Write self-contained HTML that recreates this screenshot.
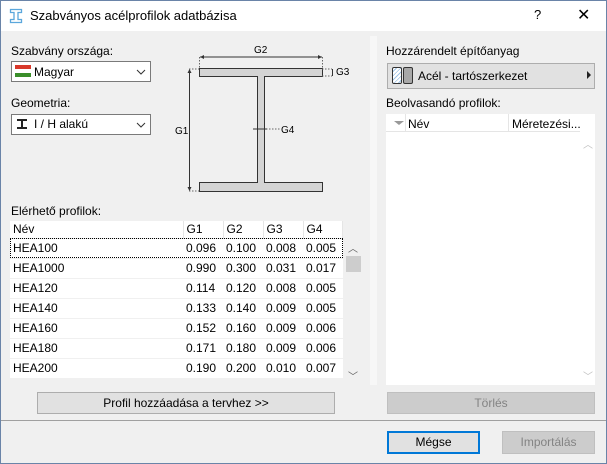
<!DOCTYPE html>
<html><head><style>
*{margin:0;padding:0;box-sizing:border-box}
body{width:607px;height:464px;background:#f0f0f0;font-family:"Liberation Sans",sans-serif;font-size:12px;color:#000;position:relative;overflow:hidden}
.a{position:absolute}
.frame{position:absolute;left:0;top:0;width:607px;height:464px;border:1px solid #6a84a8;pointer-events:none}
.title{left:0;top:0;width:607px;height:31px;background:#fff}
.combo{background:#fff;border:1px solid #7a7a7a;height:21px}
.btn{background:#e1e1e1;border:1px solid #adadad;text-align:center;line-height:20px}
.dis{background:#cccccc;border:1px solid #bfbfbf;color:#838383}
.tw{position:absolute;left:10px;top:221px;width:333px;height:158px;overflow:hidden;background:#fff}
table{border-collapse:collapse;width:333px;background:#fff}
td{height:20px;padding-left:3px;border-bottom:1px solid #f0f0f0;font-size:12px}
th{height:17px;text-align:left;font-weight:normal;padding-left:3px;border-right:1px solid #e5e5e5;border-bottom:1px solid #e5e5e5}
</style></head><body>
<div class="a title"></div>
<svg class="a" style="left:9px;top:8px" width="14" height="16" viewBox="0 0 14 16"><path d="M1.5 1.5h11v3h-3.5v7h3.5v3h-11v-3h3.5v-7h-3.5z" fill="none" stroke="#5ba7dc" stroke-width="1.3"/></svg>
<div class="a" style="left:30px;top:8px;font-size:13px">Szabványos acélprofilok adatbázisa</div>
<div class="a" style="left:534px;top:7px;font-size:13px">?</div>
<div class="a" style="left:577px;top:5px;font-size:16px">✕</div>

<div class="a" style="left:11px;top:44px">Szabvány országa:</div>
<div class="a combo" style="left:11px;top:61px;width:140px"></div>
<div class="a" style="left:15px;top:65px;width:16px;height:4px;background:#d8382a"></div>
<div class="a" style="left:15px;top:69px;width:16px;height:4px;background:#fff"></div>
<div class="a" style="left:15px;top:73px;width:16px;height:4px;background:#3a8e2a"></div>
<div class="a" style="left:34px;top:65px">Magyar</div>
<svg class="a" style="left:136px;top:69px" width="10" height="6"><path d="M1 1l4 4 4-4" fill="none" stroke="#333"/></svg>

<div class="a" style="left:11px;top:96px">Geometria:</div>
<div class="a combo" style="left:11px;top:114px;width:140px"></div>
<svg class="a" style="left:16px;top:118px" width="12" height="12"><path d="M1 2h10M1 10h10M6 2v8" stroke="#222" stroke-width="2"/></svg>
<div class="a" style="left:34px;top:117px">I / H alakú</div>
<svg class="a" style="left:136px;top:122px" width="10" height="6"><path d="M1 1l4 4 4-4" fill="none" stroke="#333"/></svg>

<svg class="a" style="left:170px;top:40px" width="185" height="160" viewBox="170 40 185 160">
<path d="M199.5 68.5h123v8h-58v106h58v9h-123v-9h58v-106h-58z" fill="#d4d4d4" stroke="#333"/>
<path d="M200 57h122" stroke="#333"/><path d="M200 57l4-2v4zM322 57l-4-2v4z" fill="#333"/>
<path d="M199.5 57v11M322.5 57v11M322 69h10M322 76h10M189 69h10M189 191h10M266 129h14" stroke="#666" stroke-dasharray="1.5 1.5"/>
<path d="M189.5 70v120" stroke="#333"/><path d="M189.5 69l-2 4h4zM189.5 191l-2-4h4z" fill="#333"/>
<path d="M332.5 69v7" stroke="#333"/>
<path d="M253 129h14" stroke="#333"/>
<text x="254" y="53" font-size="10" font-family="Liberation Sans">G2</text>
<text x="336" y="75" font-size="10" font-family="Liberation Sans">G3</text>
<text x="175" y="134" font-size="10" font-family="Liberation Sans">G1</text>
<text x="281" y="133" font-size="10" font-family="Liberation Sans">G4</text>
</svg>

<div class="a" style="left:11px;top:204px">Elérhető profilok:</div>
<div class="tw">
<table>
<tr><th style="width:173px">Név</th><th style="width:40px">G1</th><th style="width:40px">G2</th><th style="width:40px">G3</th><th>G4</th></tr>
<tr><td>HEA100</td><td>0.096</td><td>0.100</td><td>0.008</td><td>0.005</td></tr>
<tr><td>HEA1000</td><td>0.990</td><td>0.300</td><td>0.031</td><td>0.017</td></tr>
<tr><td>HEA120</td><td>0.114</td><td>0.120</td><td>0.008</td><td>0.005</td></tr>
<tr><td>HEA140</td><td>0.133</td><td>0.140</td><td>0.009</td><td>0.005</td></tr>
<tr><td>HEA160</td><td>0.152</td><td>0.160</td><td>0.009</td><td>0.006</td></tr>
<tr><td>HEA180</td><td>0.171</td><td>0.180</td><td>0.009</td><td>0.006</td></tr>
<tr><td>HEA200</td><td>0.190</td><td>0.200</td><td>0.010</td><td>0.007</td></tr>
<tr><td>HEA220</td><td>0.210</td><td>0.220</td><td>0.011</td><td>0.007</td></tr>
</table>
</div>
<div class="a" style="left:10px;top:238px;width:333px;height:20px;border:1px dotted #000"></div>
<div class="a" style="left:346px;top:256px;width:15px;height:16px;background:#cdcdcd"></div>
<div class="a" style="left:348px;top:240px;font-size:10px;color:#606060">︿</div>
<div class="a" style="left:348px;top:368px;font-size:10px;color:#606060">﹀</div>

<div class="a btn" style="left:37px;top:392px;width:298px;height:22px">Profil hozzáadása a tervhez &gt;&gt;</div>

<div class="a" style="left:370px;top:36px;width:7px;height:349px;background:#f7f7f7"></div>

<div class="a" style="left:386px;top:44px">Hozzárendelt építőanyag</div>
<div class="a btn" style="left:387px;top:63px;width:208px;height:26px"></div>
<div class="a" style="left:392px;top:67px;width:10px;height:17px;border:1px solid #333;border-radius:2px;background:repeating-linear-gradient(135deg,#fff 0 2px,#9ec3e6 2px 3px)"></div>
<div class="a" style="left:403px;top:67px;width:10px;height:17px;border:1px solid #333;border-radius:2px;background:#a8a8a8"></div>
<div class="a" style="left:418px;top:69px">Acél - tartószerkezet</div>
<div class="a" style="left:587px;top:71px;width:0;height:0;border-left:4px solid #222;border-top:4px solid transparent;border-bottom:4px solid transparent"></div>

<div class="a" style="left:386px;top:96px">Beolvasandó profilok:</div>
<div class="a" style="left:386px;top:114px;width:209px;height:271px;background:#fff"></div>
<div class="a" style="left:405px;top:114px;width:1px;height:18px;background:#e5e5e5"></div>
<div class="a" style="left:508px;top:114px;width:1px;height:18px;background:#e5e5e5"></div>
<div class="a" style="left:386px;top:131px;width:194px;height:1px;background:#e5e5e5"></div>
<div class="a" style="left:394px;top:121px;width:0;height:0;border-top:4px solid #999;border-left:5px solid transparent;border-right:5px solid transparent"></div>
<div class="a" style="left:408px;top:117px">Név</div>
<div class="a" style="left:512px;top:117px">Méretezési...</div>
<div class="a" style="left:583px;top:136px;font-size:10px;color:#c0c0c0">︿</div>
<div class="a" style="left:583px;top:368px;font-size:10px;color:#c0c0c0">﹀</div>

<div class="a btn dis" style="left:387px;top:392px;width:208px;height:22px">Törlés</div>

<div class="a" style="left:0;top:420px;width:607px;height:1px;background:#a0a0a0"></div>
<div class="a btn" style="left:387px;top:431px;width:93px;height:23px;border:2px solid #0078d7;line-height:19px">Mégse</div>
<div class="a btn dis" style="left:502px;top:431px;width:93px;height:23px">Importálás</div>
<div class="frame"></div>
</body></html>
